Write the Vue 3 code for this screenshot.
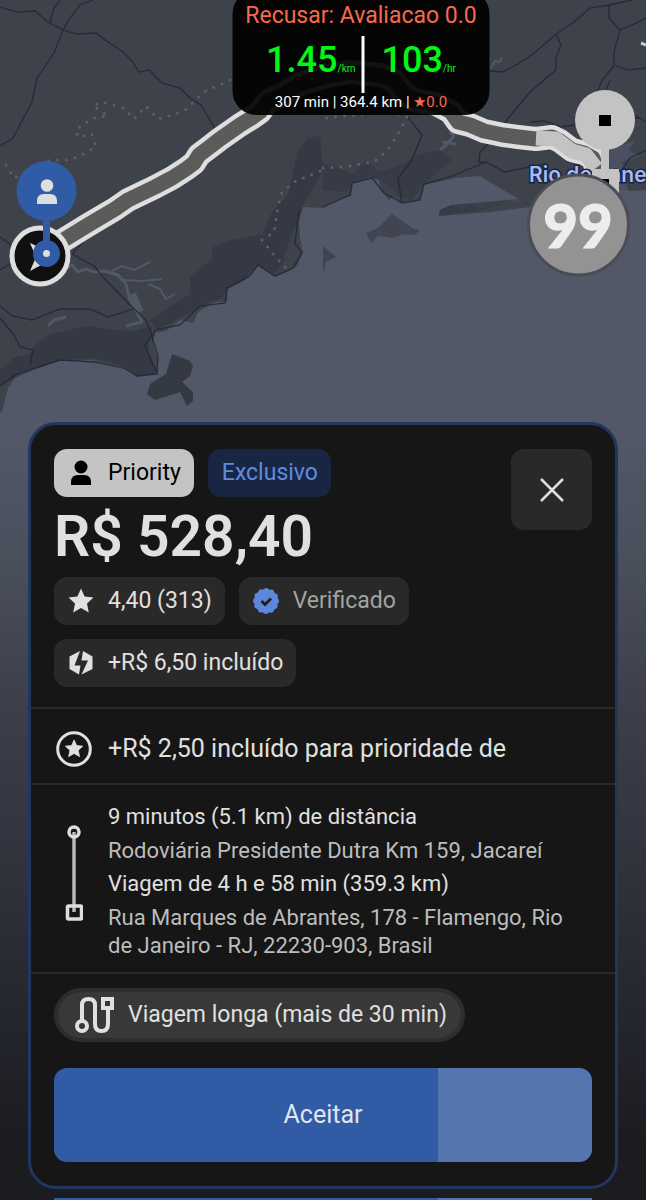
<template>
  <main class="screen">
    <section class="map">
      <svg class="map-art" viewBox="0 0 646 430" preserveAspectRatio="xMidYMin slice" aria-hidden="true">
        <rect width="646" height="430" fill="#525867" />

        <!-- land -->
        <path
          fill="#3e424a"
          d="M0 0H646V190L630 191 612 186 560 201 530 207 490 212 439 216 440 210 451 205 464 210 466 204 482 209 520 200 480 176 455 178 424 185 420 200 403 203 393 197 389 200 380 189 379 180 370 178 353 183 351 196 338 200 323 208 303 207 299 222 300 238 303 252 297 266 291 270 275 277 264 270 258 265 245 280 228 289 227 302 215 302 198 312 193 323 180 320 166 331 155 333 153 345 158 358 157 374 137 377 124 367 104 363 92 360 60 361 33 370 15 378 8 388 2 412 0 412Z"
        />
        <!-- forest -->
        <g fill="#353943">
          <path d="M0 370 14 358 30 354 34 346 50 334 88 326 130 332 152 326 148 350 155 374 138 376 122 366 94 358 62 360 24 372 0 386Z" />
          <path d="M150 320 190 294 190 277 213 258 211 248 232 240 262 235 272 212 288 195 292 176 298 150 308 138 320 136 323 170 304 204 298 220 291 235 283 262 275 274 259 265 244 280 229 288 222 298 205 304 184 316 158 329Z" />
          <path d="M323 163 340 168 354 174 366 160 380 172 398 166 420 154 440 150 452 160 440 170 424 184 412 200 400 198 388 184 370 176 353 182 346 192 323 190Z" opacity=".7" />
          <path d="M172 354 190 361 193 366 190 376 182 382 193 392 193 401 187 406 180 392 155 400 147 394 150 384 166 374Z" />
          <path d="M439 216 440 210 451 205 520 199 482 210Z" opacity=".8" />
          <path d="M366 233 378 228 384 222 392 214 398 218 404 222 412 228 420 231 414 235 404 234 392 238 378 236 371 243Z" opacity=".6" />
          <path d="M323 246 336 257 326 262 323 274Z" opacity=".6" />
        </g>

        <!-- lakes and inlets -->
        <g fill="none" stroke="#525867" stroke-width="3" stroke-linejoin="round">
          <path d="M67 268 72 265 78 272 86 269 94 272 105 271 118 275 126 284 130 300 138 314 142 322 126 326" />
          <path d="M112 271 122 266 134 270 150 262M122 280 142 281 162 279M148 284 160 289 166 299 175 294" stroke-width="2" />
          <path d="M48 326 54 320 66 317" />
          <path d="M440 150 448 143 454 136 450 132M443 142 456 144" />
          <path d="M491 68 495 61 500 62 502 57" stroke-width="2" />
          <path d="M132 294 140 312" stroke-width="8" />
        </g>
        <path d="M607 152 625 144 635 140 629 150 640 156 622 162 628 190H612Z" fill="#4a5060" />
        <path d="M641 43 646 45" stroke="#b5cdee" stroke-width="3" />

        <!-- roads and borders -->
        <g fill="none" stroke="#22263a" stroke-width="1.3" opacity=".85">
          <path d="M93 0 80 5 70 18 63 30 54 53 37 78 32 102 13 138 0 146" />
          <path d="M0 7 17 12 35 11 48 22 63 30 77 34 96 33 108 42 122 51 132 61 139 72 149 70 162 83 180 88 190 98 201 105 215 129" />
          <path d="M60 0 54 8 50 22" />
          <path d="M0 306 12 316 32 320 60 309 90 309 108 317 133 309M0 318 14 335 20 347 33 350 30 365" />
          <path d="M0 237 25 255 0 270M92 232 72 254 94 266 104 278 128 303 146 320 152 335 145 345 157 374" />
          <path d="M0 386 15 375 60 360 95 362 124 368 137 376 157 374 158 355 152 338 155 330 180 325 200 306 225 303 227 288 250 276 258 265 275 276 293 268 302 253 295 243 299 210" />
          <path d="M323 207 350 195 352 183 372 178 384 193 402 203 420 200 424 184 450 177 486 162 505 172 545 164" />
          <path d="M486 162 479 162 480 152 497 134 510 116 530 92 556 70 556 58 561 45 556 34 532 55 518 64 503 72 490 71M556 34 574 22 590 8 609 5 609 18 620 30 614 52 614 66 602 80 596 96" />
          <path d="M609 5 632 0M620 30 632 25 646 18M616 66 628 70 646 68M530 122 545 121 561 127 582 124 640 118M402 203 398 178 412 160 422 135 408 117M610 80 604 95 646 122M622 170 630 158 646 150" />
        </g>
        <g fill="none" stroke="#645c66" stroke-width="3" stroke-linecap="round" stroke-dasharray="0 9">
          <path d="M6 165 14 178 28 170 50 160 70 160 88 152 96 146 92 134 78 137 76 130 92 118 108 116 93 106 102 102 124 108 134 119 146 106 158 119 184 111 204 92 232 79" />
          <path d="M323 168 345 167 375 161 388 150 400 130 407 117 390 112 323 118M320 171 296 181 282 192 278 207 274 232 262 240 274 255 288 270" />
        </g>

        <!-- route -->
        <g fill="none" stroke-linejoin="round">
          <path
            v-for="layer in routeLayers"
            :key="layer.color"
            :d="routePath"
            :stroke="layer.color"
            :stroke-width="layer.width"
          />
          <path d="M536 138 556 139 572 151 586 155 596 168" stroke="#c3c3c3" stroke-width="15" />
        </g>

        <text x="529" y="182" class="city">Rio de Jane</text>

        <!-- destination marker -->
        <path d="M592 169H601V145H609V169H619V195H592Z" fill="#c3c3c3" />
        <rect x="602" y="179" width="7" height="7" />
        <circle cx="605" cy="120" r="30" fill="#c3c3c3" />
        <rect x="599" y="115" width="12" height="11" />

        <!-- driver and pickup markers -->
        <circle cx="40" cy="256" r="28" fill="#101011" stroke="#dedede" stroke-width="5" />
        <path d="M30 243 58 256 30 271 36 257Z" fill="#dedede" />
        <path d="M46.500 215V253" stroke="#305ba6" stroke-width="7" />
        <circle cx="46.500" cy="191" r="30" fill="#305ba6" />
        <circle cx="46.500" cy="253.500" r="13.500" fill="#305ba6" />
        <circle cx="46.500" cy="253.500" r="3.500" fill="#dedede" />
        <circle cx="47" cy="185.500" r="6.300" fill="#dedede" />
        <path d="M37 204V201Q37 194 44 194H50Q57 194 57 201V204Z" fill="#dedede" />

        <circle cx="578.500" cy="225" r="50" fill="#949293" stroke="#4a4c56" stroke-width="3" />
        <text x="578" y="248" class="app-logo">99</text>
      </svg>

      <aside class="rate-box">
        <p class="rate-title">Recusar: Avaliacao 0.0</p>
        <div class="rate-values">
          <p class="rate">1.45<small>/km</small></p>
          <p class="rate">103<small>/hr</small></p>
        </div>
        <p class="rate-info">307 min | 364.4 km | <span class="low">★0.0</span></p>
      </aside>
    </section>

    <section class="offer">
      <header class="offer-head">
        <div class="chips">
          <span class="chip priority">
            <svg class="icon" viewBox="0 0 26 26" fill="currentColor" aria-hidden="true">
              <circle cx="13" cy="7" r="6.500" />
              <path d="M3 25V22Q3 15 10 15H16Q23 15 23 22V25Z" />
            </svg>
            Priority
          </span>
          <span class="chip exclusive">Exclusivo</span>
        </div>
        <h1 class="price">R$ 528,40</h1>
        <button class="close" type="button" aria-label="Fechar">
          <svg viewBox="0 0 26 26" aria-hidden="true">
            <path d="M2 2 24 24M24 2 2 24" fill="none" stroke="currentColor" stroke-width="2.500" />
          </svg>
        </button>
      </header>

      <div class="chips details">
        <span class="chip">
          <svg class="icon" viewBox="0 0 26 26" fill="currentColor" aria-hidden="true">
            <path :d="starPath" />
          </svg>
          4,40 (313)
        </span>
        <span class="chip muted">
          <svg class="icon" viewBox="0 0 26 26" aria-hidden="true">
            <circle cx="13" cy="13" r="12" fill="#5b88dc" />
            <circle cx="13" cy="13" r="10.500" fill="none" stroke="#5b88dc" stroke-width="5" stroke-linecap="round" stroke-dasharray="0 5.498" />
            <path d="M8.500 13 12 16.500 18 10.500" fill="none" stroke="#202020" stroke-width="3" />
          </svg>
          Verificado
        </span>
        <span class="chip">
          <svg class="icon" viewBox="0 0 26 26" fill="currentColor" aria-hidden="true">
            <path d="M12 1 1.500 6.500V19L11 24.500 12.500 15.500H6.500Z" />
            <path d="M15 1 24.500 6.500V19L13.500 24.500 20 10.500H13.500Z" />
          </svg>
          +R$ 6,50 incluído
        </span>
      </div>

      <div class="bonus">
        <svg class="bonus-icon" viewBox="0 0 36 36" aria-hidden="true">
          <circle cx="18" cy="18" r="16.300" fill="none" stroke="currentColor" stroke-width="3" />
          <path :d="starPath" transform="translate(9 8.500) scale(.7)" fill="currentColor" stroke="currentColor" stroke-linejoin="round" />
        </svg>
        <p>+R$ 2,50 incluído para prioridade de</p>
      </div>

      <div class="trip">
        <svg class="trip-line" viewBox="0 0 18 98" fill="none" aria-hidden="true">
          <path d="M9 8V88" stroke="#b9b9b9" stroke-width="3.500" />
          <circle cx="9" cy="8" r="5" stroke="#dedede" stroke-width="3.500" />
          <rect x="2.500" y="82" width="14" height="13" rx="1" stroke="#dedede" stroke-width="3.500" />
        </svg>
        <dl class="stops">
          <template v-for="stop in stops" :key="stop.title">
            <dt>{{ stop.title }}</dt>
            <dd>{{ stop.address }}</dd>
          </template>
        </dl>
      </div>

      <footer class="actions">
        <p class="long-trip">
          <svg class="long-icon" viewBox="0 0 40 38" fill="none" stroke="currentColor" stroke-width="4" aria-hidden="true">
            <circle cx="8" cy="30" r="5" />
            <path d="M8 25V9Q8 3 14.500 3T21 9V28Q21 35 27.500 35T34 28V14" />
            <rect x="29" y="3" width="9" height="9" />
          </svg>
          Viagem longa (mais de 30 min)
        </p>
        <button class="accept" type="button">
          <span class="elapsed" :style="{ width: remaining + '%' }"></span>
          <span class="accept-label">Aceitar</span>
        </button>
      </footer>
    </section>

    <div class="next-offer">
      <span class="elapsed" :style="{ width: remaining + '%' }"></span>
    </div>
  </main>
</template>

<script setup>
import { ref } from "vue";

const remaining = ref(28.6);

const starPath = "M13 0.500 16.600 8.500 25.500 9.500 19 15.500 20.800 24.500 13 20 5.200 24.500 7 15.500 0.500 9.500 9.400 8.500Z";

const routePath =
  "M62 241 88 225 115 209 128 200 155 187 172 178 186 169 194 163 199 155 207 149 220 139 240 125 253 117 260 112 268 101 284 94 300 84 323 77 350 72 380 75 393 80 405 94 414 100 436 104 451 112 458 122 470 125 484 131 503 135 518 137 536 139 552 137 560 141 572 150 584 153 593 158 597 170";

const routeLayers = [
  { color: "#dedede", width: 24 },
  { color: "#5b5b5a", width: 15 },
];

const stops = [
  {
    title: "9 minutos (5.1 km) de distância",
    address: "Rodoviária Presidente Dutra Km 159, Jacareí",
  },
  {
    title: "Viagem de 4 h e 58 min (359.3 km)",
    address: "Rua Marques de Abrantes, 178 - Flamengo, Rio de Janeiro - RJ, 22230-903, Brasil",
  },
];
</script>

<style>
body {
  margin: 0;
  background: #1b1c20;
}
</style>

<style scoped>
* {
  box-sizing: border-box;
}

p, h1, dl, dd {
  margin: 0;
}

.screen {
  min-height: 100vh;
  display: flex;
  flex-direction: column;
  overflow: hidden;
  background: linear-gradient(#525867 430px, #4a4f5c 560px, #3b3e49 720px, #292b34 960px, #1b1c20 1140px);
  color: #e0e0e0;
  font-family: "Roboto", "Liberation Sans", sans-serif;
  font-size: 23px;
  line-height: 28px;
}

/* Map */
.map {
  position: relative;
  height: 422px;
}

.map-art {
  display: block;
  width: 100%;
  height: 100%;
}

.city {
  font-family: "Inter", sans-serif;
  font-size: 21px;
  font-weight: 600;
  fill: #a5b9f4;
  stroke: #1b2342;
  stroke-width: 3px;
  paint-order: stroke;
}

.app-logo {
  font-family: "Lato", sans-serif;
  font-size: 60px;
  font-weight: 900;
  text-anchor: middle;
  fill: #ededed;
  stroke: #ededed;
  stroke-width: 1px;
}

.rate-box {
  position: absolute;
  top: -10px;
  left: 50%;
  transform: translateX(-50%);
  margin-left: 38px;
  width: 257px;
  height: 125px;
  padding-top: 12px;
  border-radius: 24px;
  background: rgba(0, 0, 0, 0.92);
  text-align: center;
  white-space: nowrap;
}

.rate-title {
  color: #f7694c;
  font-size: 23px;
}

.rate-values {
  display: flex;
  justify-content: center;
  margin-top: 6px;
}

.rate {
  padding: 0 17px;
  color: #00f814;
  font-size: 36px;
  font-weight: 500;
  line-height: 48px;
}

.rate:first-child {
  padding-right: 6px;
  border-right: 3px solid #fff;
}

.rate small {
  font-size: 10px;
  font-weight: 400;
}

.rate-info {
  color: #fff;
  font-size: 15px;
  line-height: 18px;
}

.low {
  color: #f7694c;
}

/* Offer card */
.offer {
  margin: 0 28px;
  border: 3px solid #22375f;
  border-radius: 28px;
  background: #161616;
}

.offer-head {
  position: relative;
  padding: 24px 23px 0;
}

.chips {
  display: flex;
  flex-wrap: wrap;
  gap: 14px;
}

.chip {
  display: flex;
  align-items: center;
  gap: 14px;
  height: 48px;
  padding: 0 13px 0 14px;
  border-radius: 13px;
  background: #292929;
}

.icon {
  width: 26px;
  height: 26px;
}

.priority {
  background: #c4c4c4;
  color: #000;
}

.exclusive {
  background: #182644;
  color: #5f8be0;
}

.muted {
  color: #a3a3a3;
}

.price {
  margin-top: 8px;
  font-size: 57px;
  font-weight: 600;
  line-height: 64px;
}

.close {
  position: absolute;
  top: 24px;
  right: 23px;
  width: 81px;
  height: 81px;
  display: grid;
  place-items: center;
  padding: 0;
  border: none;
  border-radius: 13px;
  background: #292929;
  color: #dedede;
  cursor: pointer;
}

.close svg {
  width: 26px;
  height: 26px;
}

.details {
  padding: 8px 170px 20px 23px;
}

.bonus {
  display: flex;
  align-items: center;
  gap: 16px;
  height: 76px;
  padding: 6px 23px 0 25px;
  border-top: 2px solid #2a2a2a;
  font-size: 25px;
}

.bonus-icon {
  width: 36px;
  height: 36px;
}

.trip {
  display: flex;
  align-items: flex-start;
  gap: 25px;
  padding: 18px 23px 12px 34px;
  border-top: 2px solid #2a2a2a;
}

.trip-line {
  flex: none;
  width: 18px;
  height: 98px;
  margin-top: 21px;
}

.stops {
  font-size: 22px;
}

.stops dt {
  margin-bottom: 6px;
}

.stops dd {
  color: #bdbdbd;
}

.stops dd:not(:last-child) {
  margin-bottom: 5px;
}

.actions {
  display: flex;
  flex-direction: column;
  align-items: flex-start;
  gap: 26px;
  padding: 14px 23px 24px;
  border-top: 2px solid #2a2a2a;
}

.long-trip {
  display: flex;
  align-items: center;
  gap: 14px;
  height: 54px;
  padding: 0 14px 0 16px;
  border: 4px solid #2d2d2d;
  border-radius: 27px;
  background: #383838;
}

.long-icon {
  width: 40px;
  height: 38px;
}

.accept {
  position: relative;
  width: 100%;
  height: 94px;
  padding: 0;
  border: none;
  border-radius: 13px;
  overflow: hidden;
  background: #315ba5;
  color: #e0e5f0;
  font: inherit;
  font-size: 25px;
  cursor: pointer;
}

.elapsed {
  position: absolute;
  top: 0;
  right: 0;
  bottom: 0;
  background: #5575ae;
}

.accept-label {
  position: relative;
}

.next-offer {
  position: relative;
  height: 2px;
  margin: 9px 54px 0;
  background: #315ba5;
}
</style>
